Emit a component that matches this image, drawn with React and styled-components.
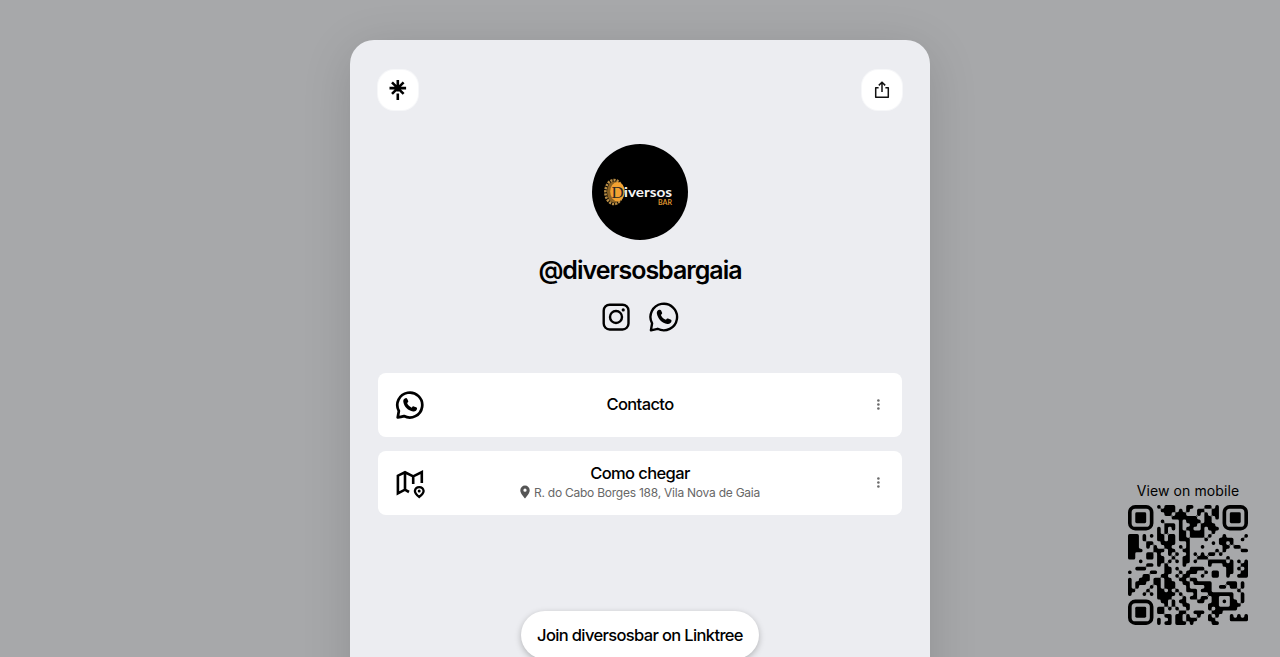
import styled, { createGlobalStyle, css } from "styled-components";

const GlobalStyle = createGlobalStyle`
  * {
    box-sizing: border-box;
  }
  body {
    margin: 0;
    overflow: hidden;
    background-color: #a7a8aa;
    color: #000;
    font-family: "Inter", "Liberation Sans", sans-serif;
  }
`;

const Page = styled.div`
  height: 100vh;
  padding-top: 40px;
  display: flex;
  justify-content: center;
  position: relative;
  overflow: hidden;
`;

const Card = styled.main`
  width: 580px;
  height: 720px;
  padding: 30px 28px;
  display: flex;
  flex-direction: column;
  align-items: center;
  background-color: #ecedf1;
  border-radius: 24px 24px 0 0;
  box-shadow: 0 10px 50px rgba(0, 0, 0, 0.14);
`;

const TopBar = styled.header`
  width: 100%;
  display: flex;
  justify-content: space-between;
`;

const IconButton = styled.button`
  width: 40px;
  height: 40px;
  padding: 0;
  border: none;
  border-radius: 16px;
  background-color: #fff;
  box-shadow: 0 0 0 1px rgba(255, 255, 255, 0.55);
  display: flex;
  align-items: center;
  justify-content: center;
  cursor: pointer;
`;

const Avatar = styled.div`
  width: 96px;
  height: 96px;
  margin-top: 34px;
  border-radius: 50%;
  background-color: #000;
  overflow: hidden;
  flex-shrink: 0;
`;

const Handle = styled.h1`
  margin: 14px 0 0;
  font-size: 25px;
  line-height: 32px;
  font-weight: 600;
  letter-spacing: -1px;
  white-space: nowrap;
`;

const Socials = styled.div`
  margin-top: 15px;
  display: flex;
  gap: 16px;

  svg {
    display: block;
  }
`;

const Links = styled.div`
  width: 100%;
  margin-top: 40px;
  display: flex;
  flex-direction: column;
  gap: 14px;
`;

const LinkCard = styled.a`
  height: 64px;
  padding: 0 16px;
  display: grid;
  grid-template-columns: 32px 1fr 32px;
  align-items: center;
  background-color: #fff;
  border-radius: 8px;
  cursor: pointer;

  > svg {
    display: block;
    justify-self: center;
  }
  > svg:last-child {
    justify-self: end;
  }
`;

const LinkText = styled.div`
  padding-bottom: ${(props) => (props.$withAddress ? "4px" : "2px")};
  display: flex;
  flex-direction: column;
  align-items: center;
`;

const label = css`
  font-size: 16.5px;
  font-weight: 550;
  white-space: nowrap;
`;

const LinkTitle = styled.span`
  ${label}
  line-height: 22px;
  letter-spacing: -0.6px;
`;

const Address = styled.span`
  display: flex;
  align-items: center;
  gap: 4px;
  color: #676767;
  font-size: 12px;
  line-height: 17px;
  letter-spacing: -0.24px;
  white-space: nowrap;
`;

const JoinButton = styled.button`
  ${label}
  width: 238px;
  height: 48px;
  margin-top: 96px;
  padding: 0;
  border: none;
  border-radius: 24px;
  background-color: #fff;
  color: #000;
  font-family: inherit;
  letter-spacing: -0.64px;
  box-shadow: 0 2px 6px rgba(0, 0, 0, 0.25);
  flex-shrink: 0;
  cursor: pointer;
`;

const MobilePanel = styled.aside`
  position: absolute;
  right: 32px;
  bottom: 32px;
  width: 120px;
  display: flex;
  flex-direction: column;
  align-items: center;
  gap: 5px;
  font-size: 14px;
  line-height: 18px;
  letter-spacing: 0.1px;
  white-space: nowrap;
`;

const WhatsappIcon = ({ size, stroke }) => (
  <svg width={size} height={size} viewBox="0 0 32 32" fill="none">
    <path
      d="M2.9 29.3 4.1 22.4A13.3 13.3 0 1 1 9.6 27.8Q6.3 28.5 2.9 29.3Z"
      stroke="#000"
      strokeWidth={stroke}
      strokeLinejoin="round"
    />
    <path
      d="M11.2 8.7C9.4 9.1 8.5 10.7 8.9 12.8C9.8 17.9 14 22.1 19.3 22.9C21.5 23.2 23.3 22 23.5 20.1C23.6 19.2 23.2 18.8 22.5 18.5L20 17.5C19.2 17.2 18.8 17.6 17.9 18.8C15.7 18 13.6 15.9 12.9 13.9C13.9 13 14.4 12.5 14.1 11.7L13.1 9.6C12.7 8.8 12.2 8.5 11.2 8.7Z"
      fill="#000"
    />
  </svg>
);

const InstagramIcon = () => (
  <svg width="32" height="32" viewBox="0 0 32 32" fill="none">
    <rect x="3.7" y="3.7" width="24.8" height="24.8" rx="6" stroke="#000" strokeWidth="2.4" />
    <circle cx="16" cy="16" r="6" stroke="#000" strokeWidth="2.4" />
    <circle cx="23.2" cy="8.9" r="1.6" fill="#000" />
  </svg>
);

const MapIcon = () => (
  <svg width="32" height="32" viewBox="0 0 32 32" fill="none" stroke="#000" strokeWidth="2.6">
    <path d="M15 25 10.9 22.7 3.9 26.3V8.7L11 5.3 19.2 9.4 27.8 5.2V16M11 5.3V22.7M19.2 9.4V17" />
    <path
      d="M25.2 30C22 27.2 20.9 25.6 20.9 23.9A4.4 4.4 0 0 1 29.6 23.9C29.6 25.6 28.4 27.2 25.2 30Z"
      strokeWidth="2.3"
    />
    <circle cx="25.2" cy="24" r="1.5" fill="#000" stroke="none" />
  </svg>
);

const DotsIcon = () => (
  <svg width="16" height="16" viewBox="0 0 16 16" fill="#6b6b6b">
    <circle cx="8.4" cy="3.5" r="1.3" />
    <circle cx="8.4" cy="7.5" r="1.3" />
    <circle cx="8.4" cy="11.5" r="1.3" />
  </svg>
);

const PinIcon = () => (
  <svg width="10" height="14" viewBox="0 0 10 14" fill="#555">
    <path
      fillRule="evenodd"
      d="M5 0.5A4.7 4.7 0 0 0 .3 5.2C.3 8.3 3.4 11.5 5 13.4C6.6 11.5 9.7 8.3 9.7 5.2A4.7 4.7 0 0 0 5 .5ZM5 3.6A1.6 1.6 0 1 1 5 6.8A1.6 1.6 0 0 1 5 3.6Z"
    />
  </svg>
);

const LinktreeIcon = () => (
  <svg width="20" height="20" viewBox="0 0 20 20" stroke="#000" strokeWidth="2.6">
    <path d="M9.8 0V11.5M1.5 8.1H18.1M4 2.3 15.6 13.9M15.6 2.3 4 13.9M9.8 13.6V20" />
  </svg>
);

const ShareIcon = () => (
  <svg width="16" height="18" viewBox="0 0 16 18" fill="none" stroke="#111" strokeWidth="1.5">
    <path d="M4.6 6.7H1.7V16.3H14.3V6.7H11.4" strokeLinejoin="round" />
    <path d="M8 11V1.4M4.8 4.4 8 1.2 11.2 4.4" />
  </svg>
);

const BarLogo = () => (
  <svg width="96" height="96" viewBox="0 0 96 96">
    <ellipse cx="22" cy="48" rx="8.6" ry="12" fill="none" stroke="#b98d45" strokeWidth="2.6" strokeDasharray="2.2 1" />
    <ellipse cx="22.5" cy="48" rx="7.5" ry="10.8" fill="#8a6224" />
    <ellipse cx="25.5" cy="47.6" rx="7.3" ry="9.7" fill="#f2a232" />
    <text x="19.5" y="54" fontFamily="Liberation Serif, serif" fontSize="17" fill="#292724">
      D
    </text>
    <text
      x="32"
      y="53.3"
      fontFamily="Lato, sans-serif"
      fontSize="13"
      fontWeight="700"
      fill="#f5f5f5"
      textLength="48"
      lengthAdjust="spacingAndGlyphs"
    >
      iversos
    </text>
    <text
      x="66"
      y="61.4"
      fontFamily="Lato, sans-serif"
      fontSize="7"
      fontWeight="700"
      fill="#dd922e"
      textLength="14"
      lengthAdjust="spacingAndGlyphs"
    >
      BAR
    </text>
  </svg>
);

// dark columns of each row; the three corner markers are drawn on their own
const QR_ROWS = [
  [8, 10, 11, 12, 16, 17, 21, 22, 24],
  [9, 10, 11, 12, 14, 16, 19, 20, 23, 24],
  [10, 11, 13, 14, 15, 19, 21, 23, 24],
  [12, 13, 14, 15, 16, 17, 18, 21, 22, 24],
  [9, 14, 16, 17, 18, 19, 21, 22],
  [10, 11, 12, 14, 17, 18, 20, 21, 22, 23],
  [8, 10, 12, 14, 16, 17, 20, 22, 23, 24],
  [8, 10, 14, 15, 17, 18, 19, 20, 23],
  [0, 1, 2, 4, 6, 8, 9, 11, 12, 14, 15, 17, 18, 19, 20, 22, 26, 32],
  [0, 1, 2, 4, 8, 9, 11, 12, 14, 15, 16, 21, 25, 26, 27, 28, 31],
  [0, 1, 2, 5, 6, 9, 10, 11, 12, 16, 23, 25, 26, 28],
  [0, 1, 2, 5, 7, 10, 11, 14, 16, 20, 26, 27, 29, 30],
  [0, 1, 2, 3, 7, 8, 9, 11, 12, 15, 16, 24, 26, 31, 32],
  [0, 1, 5, 6, 8, 11, 13, 16, 18, 20, 22, 23, 25],
  [0, 1, 5, 6, 8, 9, 12, 15, 16, 19, 20, 21, 27],
  [3, 8, 9, 11, 13, 15, 16, 18, 22, 23, 24, 25, 26, 28, 30, 32],
  [5, 6, 8, 10, 15, 22, 26, 27, 28, 31, 32],
  [2, 3, 4, 10, 11, 13, 17, 18, 19, 20, 27, 28, 30, 32],
  [0, 6, 7, 10, 11, 14, 16, 17, 18, 21, 23, 24, 27, 28, 31, 32],
  [4, 5, 9, 10, 13, 15, 16, 20, 23, 24, 27, 30, 31, 32],
  [0, 3, 4, 5, 7, 8, 10, 11, 14, 15, 17, 18],
  [0, 2, 3, 4, 7, 8, 10, 11, 12, 15, 16, 18, 19, 20, 21, 22, 27, 28, 29, 31],
  [0, 2, 6, 8, 10, 11, 12, 16, 21, 22, 25, 26, 28, 29, 31],
  [0, 1, 5, 8, 9, 11, 13, 16, 17, 18, 20, 21, 22, 30],
  [0, 4, 6, 8, 9, 10, 11, 12, 14, 18, 22, 23, 24, 25, 26, 27, 28, 31],
  [8, 9, 10, 11, 15, 17, 18, 20, 21, 23, 24, 28, 31],
  [9, 10, 12, 14, 15, 19, 20, 23, 24, 26, 28, 29, 31],
  [10, 12, 15, 16, 22, 23, 24, 28, 29, 30],
  [8, 9, 11, 13, 16, 22, 24, 25, 26, 27, 28, 29],
  [8, 9, 14, 15, 18, 19, 20, 23, 24, 25],
  [10, 11, 13, 14, 16, 19, 22, 24, 28, 30, 32],
  [8, 11, 13, 14, 16, 17, 18, 22, 23, 28, 29, 30, 31, 32],
  [8, 10, 11, 13, 14, 15, 17, 23, 24],
];

const isDark = (x, y) => QR_ROWS[y]?.includes(x) ?? false;

const modulePath = (x, y) => {
  const up = isDark(x, y - 1);
  const right = isDark(x + 1, y);
  const down = isDark(x, y + 1);
  const left = isDark(x - 1, y);
  const r = 0.45;
  const tl = up || left ? 0 : r;
  const tr = up || right ? 0 : r;
  const br = down || right ? 0 : r;
  const bl = down || left ? 0 : r;
  return `M${x + tl} ${y}H${x + 1 - tr}q${tr} 0 ${tr} ${tr}V${y + 1 - br}q0 ${br} ${-br} ${br}H${x + bl}q${-bl} 0 ${-bl} ${-bl}V${y + tl}q0 ${-tl} ${tl} ${-tl}Z`;
};

// rounds the inner corners where a light module meets two dark neighbours
const filletPath = (x, y) => {
  let d = "";
  [
    [-1, -1],
    [1, -1],
    [1, 1],
    [-1, 1],
  ].forEach(([dx, dy]) => {
    if (isDark(x + dx, y) && isDark(x, y + dy)) {
      const cx = dx < 0 ? x : x + 1;
      const cy = dy < 0 ? y : y + 1;
      d += `M${cx} ${cy}v${-dy * 0.4}q0 ${dy * 0.4} ${-dx * 0.4} ${dy * 0.4}Z`;
    }
  });
  return d;
};

const buildQr = () => {
  let d = "";
  for (let y = 0; y < 33; y++) {
    for (let x = 0; x < 33; x++) {
      d += isDark(x, y) ? modulePath(x, y) : filletPath(x, y);
    }
  }
  return d;
};

const QR_PATH = buildQr();

const QrCode = () => (
  <svg width="120" height="120" viewBox="0 0 33 33">
    <path d={QR_PATH} />
    {[
      [0, 0],
      [26, 0],
      [0, 26],
    ].map(([x, y]) => (
      <g key={`${x}-${y}`}>
        <rect x={x + 0.5} y={y + 0.5} width="6" height="6" rx="1.5" fill="none" stroke="#000" />
        <rect x={x + 2} y={y + 2} width="3" height="3" rx="0.4" />
      </g>
    ))}
  </svg>
);

const App = () => {
  return (
    <>
      <GlobalStyle />
      <Page>
        <Card>
          <TopBar>
            <IconButton aria-label="Linktree">
              <LinktreeIcon />
            </IconButton>
            <IconButton aria-label="Share">
              <ShareIcon />
            </IconButton>
          </TopBar>

          <Avatar>
            <BarLogo />
          </Avatar>
          <Handle>@diversosbargaia</Handle>
          <Socials>
            <InstagramIcon />
            <WhatsappIcon size={32} stroke={2.4} />
          </Socials>

          <Links>
            <LinkCard>
              <WhatsappIcon size={30} stroke={2.9} />
              <LinkText>
                <LinkTitle>Contacto</LinkTitle>
              </LinkText>
              <DotsIcon />
            </LinkCard>
            <LinkCard>
              <MapIcon />
              <LinkText $withAddress>
                <LinkTitle>Como chegar</LinkTitle>
                <Address>
                  <PinIcon />
                  R. do Cabo Borges 188, Vila Nova de Gaia
                </Address>
              </LinkText>
              <DotsIcon />
            </LinkCard>
          </Links>

          <JoinButton>Join diversosbar on Linktree</JoinButton>
        </Card>

        <MobilePanel>
          View on mobile
          <QrCode />
        </MobilePanel>
      </Page>
    </>
  );
};

export default App;
